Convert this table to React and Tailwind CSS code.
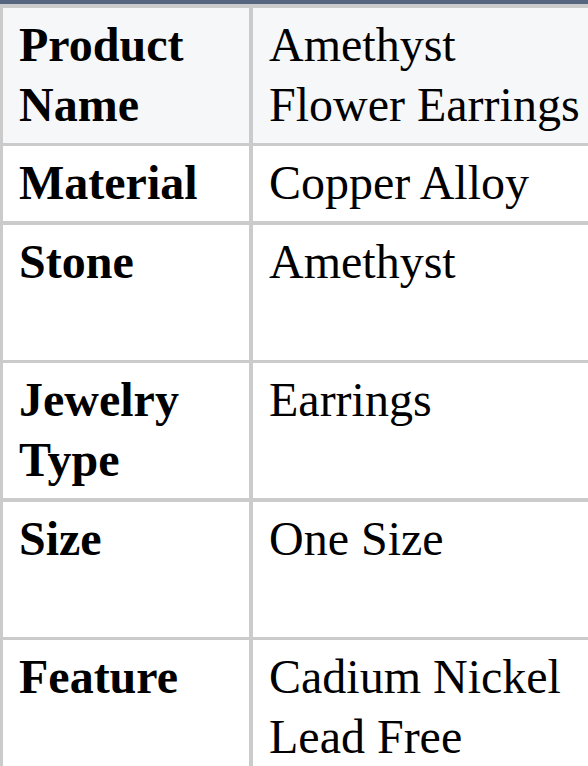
import React from "react";

const rows = [
  { label: ["Product", "Name"], value: ["Amethyst", "Flower Earrings"], head: true },
  { label: ["Material"], value: ["Copper Alloy"] },
  { label: ["Stone"], value: ["Amethyst", "\u00a0"] },
  { label: ["Jewelry", "Type"], value: ["Earrings"] },
  { label: ["Size"], value: ["One Size", "\u00a0"] },
  { label: ["Feature"], value: ["Cadium Nickel", "Lead Free"] },
];

export default function App() {
  return (
    <div className="w-[588px] h-[766px] overflow-hidden bg-white">
      <div className="h-[4px] bg-[#56657f]" />
      <div
        className="grid grid-cols-[246px_356px] gap-x-[4px] gap-y-[3.5px] bg-[#cbcbcb] pt-[3.5px] pl-[3px] w-[612px] text-black text-[48px] leading-[60px]"
        style={{ fontFamily: '"Liberation Serif", "Times New Roman", serif' }}
      >
        {rows.map((r, i) => (
          <React.Fragment key={i}>
            <div
              className={`pl-[16px] pr-[16px] pt-[7px] pb-[8px] font-bold ${
                r.head ? "bg-[#f6f7f9]" : "bg-white"
              }`}
            >
              {r.label.map((l, j) => (
                <div key={j}>{l}</div>
              ))}
            </div>
            <div
              className={`pl-[16px] pr-[16px] pt-[7px] pb-[8px] ${
                r.head ? "bg-[#f6f7f9]" : "bg-white"
              }`}
            >
              {r.value.map((l, j) => (
                <div key={j}>{l}</div>
              ))}
            </div>
          </React.Fragment>
        ))}
      </div>
    </div>
  );
}
